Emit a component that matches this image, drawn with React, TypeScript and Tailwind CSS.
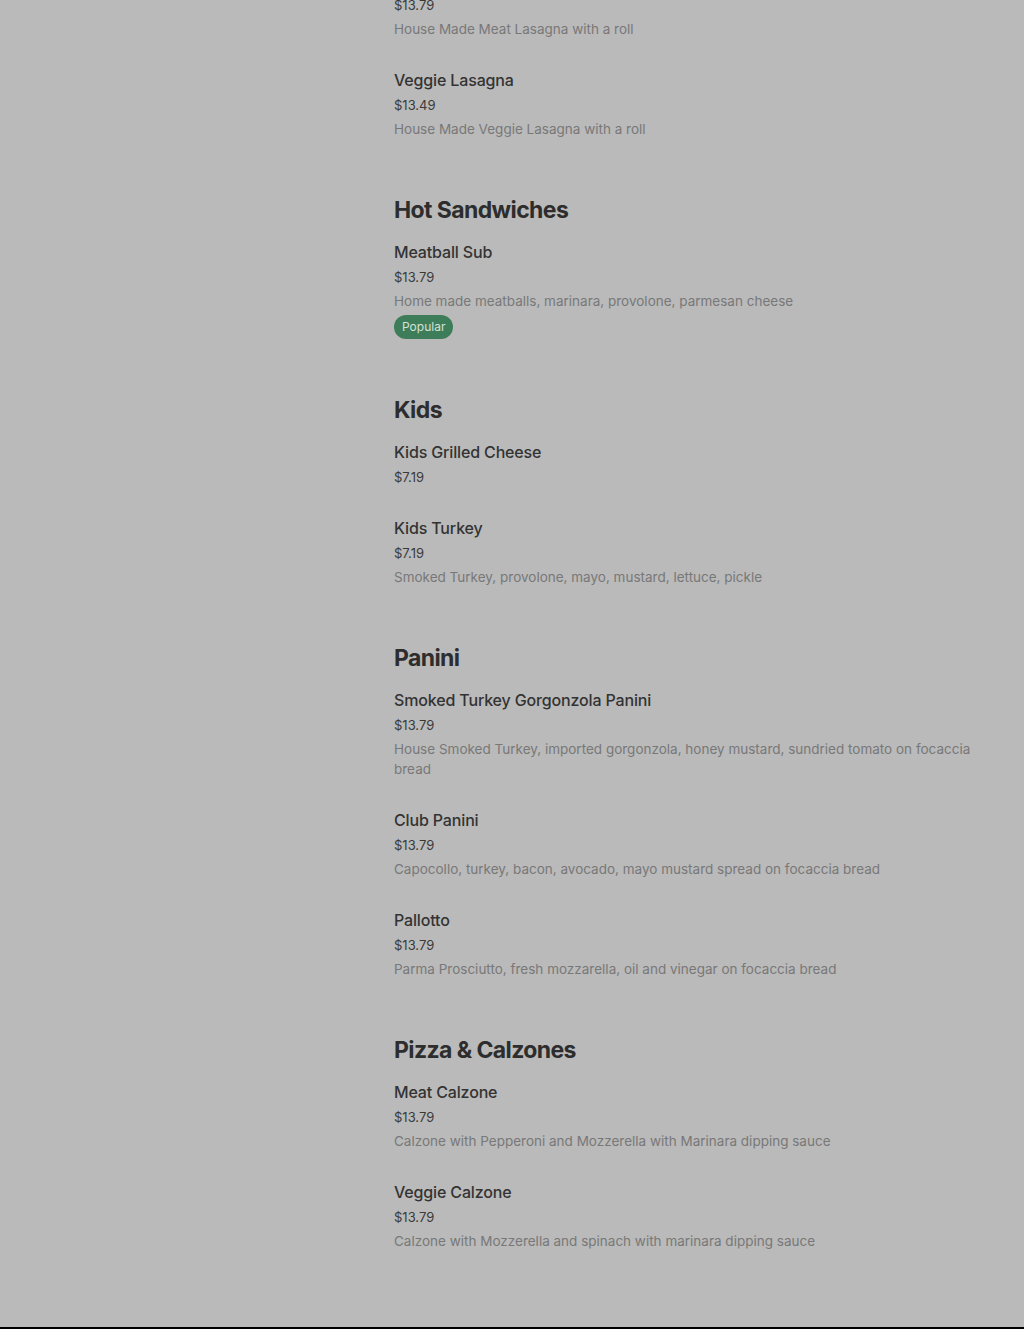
import React from "react";

type Item = { name?: string; price: string; desc?: string; popular?: boolean };
type Section = { title?: string; items: Item[] };

const sections: Section[] = [
  {
    items: [
      { price: "$13.79", desc: "House Made Meat Lasagna with a roll" },
      { name: "Veggie Lasagna", price: "$13.49", desc: "House Made Veggie Lasagna with a roll" },
    ],
  },
  {
    title: "Hot Sandwiches",
    items: [
      {
        name: "Meatball Sub",
        price: "$13.79",
        desc: "Home made meatballs, marinara, provolone, parmesan cheese",
        popular: true,
      },
    ],
  },
  {
    title: "Kids",
    items: [
      { name: "Kids Grilled Cheese", price: "$7.19" },
      { name: "Kids Turkey", price: "$7.19", desc: "Smoked Turkey, provolone, mayo, mustard, lettuce, pickle" },
    ],
  },
  {
    title: "Panini",
    items: [
      {
        name: "Smoked Turkey Gorgonzola Panini",
        price: "$13.79",
        desc: "House Smoked Turkey, imported gorgonzola, honey mustard, sundried tomato on focaccia bread",
      },
      { name: "Club Panini", price: "$13.79", desc: "Capocollo, turkey, bacon, avocado, mayo mustard spread on focaccia bread" },
      { name: "Pallotto", price: "$13.79", desc: "Parma Prosciutto, fresh mozzarella, oil and vinegar on focaccia bread" },
    ],
  },
  {
    title: "Pizza & Calzones",
    items: [
      { name: "Meat Calzone", price: "$13.79", desc: "Calzone with Pepperoni and Mozzerella with Marinara dipping sauce" },
      { name: "Veggie Calzone", price: "$13.79", desc: "Calzone with Mozzerella and spinach with marinara dipping sauce" },
    ],
  },
];

function MenuItem({ item }: { item: Item }) {
  return (
    <div className="flex flex-col">
      {item.name && (
        <div className="h-6 text-[16px] leading-6 font-medium tracking-[-0.15px] text-[#333333]">{item.name}</div>
      )}
      <div className={`${item.name ? "mt-[3px]" : ""} h-5 text-[13px] leading-5 text-[#3a3a3a]`}>{item.price}</div>
      {item.desc && (
        <div className="mt-1 text-[13.5px] leading-5 text-[#787878]">{item.desc}</div>
      )}
      {item.popular && (
        <div className="mt-1 flex">
          <span className="h-6 px-2 rounded-full bg-[#3e7d5a] text-[#d3e2d8] text-[12px] leading-6">Popular</span>
        </div>
      )}
    </div>
  );
}

export default function App() {
  return (
    <div
      className="w-[1024px] h-[1329px] overflow-hidden bg-[#bababa] flex flex-col"
      style={{ fontFamily: "Inter, 'Noto Sans', sans-serif" }}
    >
      <div className="flex-1 pl-[394px] pr-[40px]">
        <div className="-mt-[5px] flex flex-col gap-[55px]">
          {sections.map((s, i) => (
            <div key={i} className="flex flex-col">
              {s.title && (
                <h2 className="h-8 text-[23px] leading-8 font-bold tracking-[-0.6px] text-[#2d2d2d] mb-[14px]">
                  {s.title}
                </h2>
              )}
              <div className="flex flex-col gap-[29px]">
                {s.items.map((it, j) => (
                  <MenuItem key={j} item={it} />
                ))}
              </div>
            </div>
          ))}
        </div>
      </div>
      <div className="h-[2px] bg-black" />
    </div>
  );
}
